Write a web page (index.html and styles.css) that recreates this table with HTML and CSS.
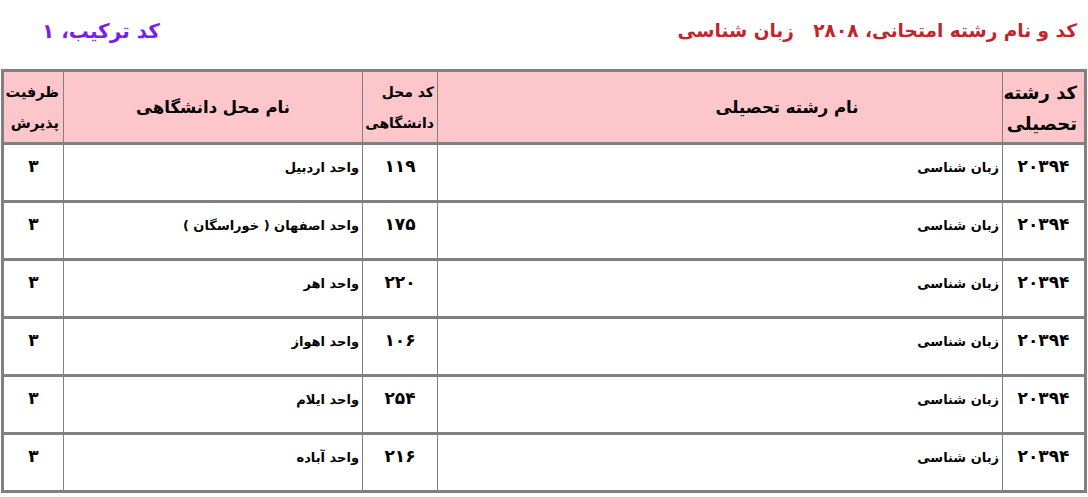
FILE: index.html
```html
<!DOCTYPE html>
<html lang="fa" dir="rtl">
<head>
<meta charset="utf-8">
<link rel="stylesheet" href="styles.css">
</head>
<body>
<div class="page">
  <div class="titles">
    <div class="title-main">کد و نام رشته امتحانی، ۲۸۰۸&nbsp;&nbsp; زبان شناسی</div>
    <div class="title-combo">کد ترکیب، ۱</div>
  </div>
  <div class="table">
    <div class="row head">
      <div class="cell c-code hd-right big">کد رشته<br>تحصیلی</div>
      <div class="cell c-name hd-center shifted">نام رشته تحصیلی</div>
      <div class="cell c-uc hd-right mid">کد محل<br>دانشگاهی</div>
      <div class="cell c-uname hd-center">نام محل دانشگاهی</div>
      <div class="cell c-cap hd-right narrow">ظرفیت<br>پذیرش</div>
    </div>
    <div class="row">
      <div class="cell c-code num">۲۰۳۹۴</div>
      <div class="cell c-name txt">زبان شناسی</div>
      <div class="cell c-uc num">۱۱۹</div>
      <div class="cell c-uname txt">واحد اردبیل</div>
      <div class="cell c-cap num">۳</div>
    </div>
    <div class="row">
      <div class="cell c-code num">۲۰۳۹۴</div>
      <div class="cell c-name txt">زبان شناسی</div>
      <div class="cell c-uc num">۱۷۵</div>
      <div class="cell c-uname txt">واحد اصفهان ( خوراسگان )</div>
      <div class="cell c-cap num">۳</div>
    </div>
    <div class="row">
      <div class="cell c-code num">۲۰۳۹۴</div>
      <div class="cell c-name txt">زبان شناسی</div>
      <div class="cell c-uc num">۲۲۰</div>
      <div class="cell c-uname txt">واحد اهر</div>
      <div class="cell c-cap num">۳</div>
    </div>
    <div class="row">
      <div class="cell c-code num">۲۰۳۹۴</div>
      <div class="cell c-name txt">زبان شناسی</div>
      <div class="cell c-uc num">۱۰۶</div>
      <div class="cell c-uname txt">واحد اهواز</div>
      <div class="cell c-cap num">۳</div>
    </div>
    <div class="row">
      <div class="cell c-code num">۲۰۳۹۴</div>
      <div class="cell c-name txt">زبان شناسی</div>
      <div class="cell c-uc num">۲۵۴</div>
      <div class="cell c-uname txt">واحد ایلام</div>
      <div class="cell c-cap num">۳</div>
    </div>
    <div class="row last">
      <div class="cell c-code num">۲۰۳۹۴</div>
      <div class="cell c-name txt">زبان شناسی</div>
      <div class="cell c-uc num">۲۱۶</div>
      <div class="cell c-uname txt">واحد آباده</div>
      <div class="cell c-cap num">۳</div>
    </div>
  </div>
</div>
</body>
</html>
```
FILE: styles.css
```css
* { box-sizing: border-box; }
html, body { margin: 0; padding: 0; background: #ffffff; }
body {
  font-family: "DejaVu Sans", "Noto Sans", sans-serif;
  font-weight: bold;
  color: #000;
}
.page {
  width: 1088px;
  padding-right: 1px;
  padding-left: 1px;
}
.titles {
  height: 69px;
  display: flex;
  justify-content: space-between;
  align-items: flex-start;
  padding: 16px 10px 0 0;
}
.title-main {
  color: #c0262c;
  font-size: 18.5px;
  line-height: 30px;
}
.title-combo {
  color: #7a1ee8;
  font-size: 20px;
  line-height: 30px;
  padding-left: 41px;
}
.table {
  width: 1086px;
  border: 3px solid #808080;
}
.row {
  display: grid;
  grid-template-columns: 82px 565px 75px 299px 59px;
  height: 58px;
  border-bottom: 3px solid #808080;
}
.row.head {
  height: 73px;
  background: #fdc6cb;
}
.row.last {
  height: 55px;
  border-bottom: none;
}
.cell {
  border-left: 1px solid #808080;
  overflow: hidden;
}
.cell.c-cap { border-left: none; }
.hd-right {
  text-align: right;
  font-size: 16px;
  line-height: 31px;
  padding: 5px 5px 0 0;
}
.hd-right.big { font-size: 18px; padding-right: 7px; }
.hd-right.mid { font-size: 14px; padding-right: 3px; }
.hd-right.narrow { font-size: 14.5px; padding-right: 4px; }
.hd-center {
  display: flex;
  align-items: center;
  justify-content: center;
  font-size: 16.5px;
}
.hd-center.shifted { padding-left: 134px; }
.num {
  text-align: center;
  font-size: 17px;
  padding-top: 10px;
  line-height: 22px;
}
.txt {
  text-align: right;
  font-size: 13px;
  padding-right: 3px;
  padding-top: 13px;
  line-height: 20px;
}
```
